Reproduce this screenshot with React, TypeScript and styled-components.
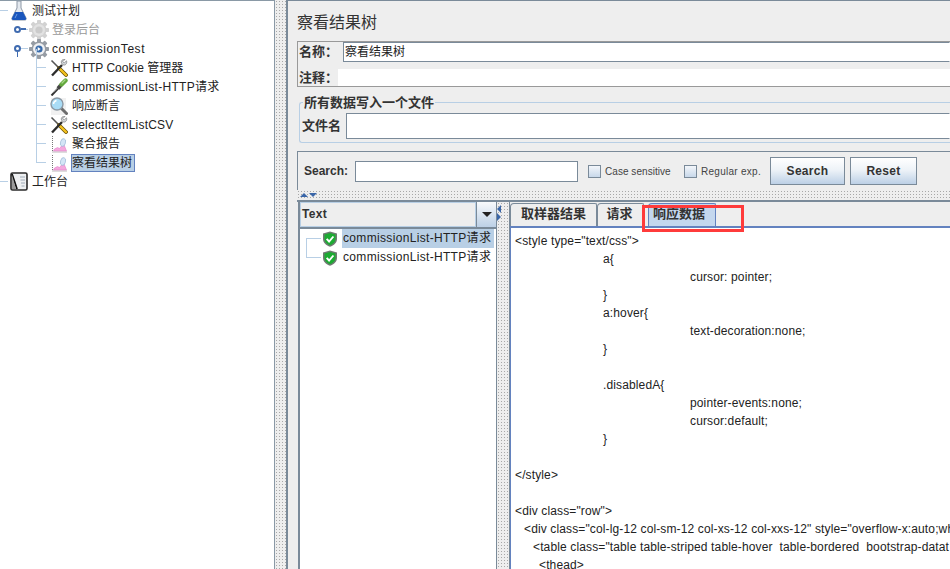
import { ReactNode } from 'react'
import styled, { createGlobalStyle } from 'styled-components'

const GlobalStyle = createGlobalStyle`
  html, body {
    margin: 0;
    padding: 0;
    background: #fff;
  }
  body {
    font-family: 'Liberation Sans', 'Noto Sans CJK SC', sans-serif;
    font-size: 12px;
    color: #222;
  }
`

const FlaskIcon = () => (
  <svg width='18' height='20' viewBox='0 0 18 20'>
    <path d='M7 0h4v7l5 10c.5 1.200 0 2-1.200 2H3.200C2 19 1.500 18.200 2 17L7 7z' fill='#e4e9ef' stroke='#8c97a5' />
    <path d='M5 11h8l3 6c.5 1.200 0 2-1.200 2H3.200C2 19 1.500 18.200 2 17z' fill='#1a56bd' />
    <path d='M7 13l-2 4' stroke='#6f9be0' />
  </svg>
)

const GearIcon = ({ disabled }: { disabled?: boolean }) => (
  <svg width='18' height='18' viewBox='0 0 18 18' style={{ overflow: 'visible' }}>
    <g fill={disabled ? '#d2d2d2' : '#969ca4'}>
      <circle cx='9' cy='9' r='7.500' />
      {[0, 45, 90, 135].map((a) => (
        <rect key={a} x='7' y='-1' width='4' height='20' rx='0.800' transform={`rotate(${a} 9 9)`} />
      ))}
    </g>
    <circle cx='9' cy='9' r='6' fill={disabled ? '#e2e2e2' : '#f0f1f3'} />
    <circle cx='9' cy='9' r='3.600' fill={disabled ? '#cbcbcb' : '#3a6cab'} />
    {!disabled && <path d='M7.700 7l3 2-3 2z' fill='#fff' />}
  </svg>
)

const ToolsIcon = () => (
  <svg width='18' height='18' viewBox='0 0 18 18'>
    <path d='M1.500 1.500l7.500 7.500' stroke='#555' strokeWidth='1.600' />
    <path d='M9 9l7 7' stroke='#6b5209' strokeWidth='3.800' strokeLinecap='round' />
    <path d='M9 9l7 7' stroke='#f4c21e' strokeWidth='2.400' strokeLinecap='round' />
    <path d='M2 16.500L12 6' stroke='#2c2c2c' strokeWidth='2.400' />
    <path d='M16.500 1.800l-2.300 2.200-1.400-1.400 2.200-2.200c-2.300-.6-4.300 1.400-3.600 3.600l1.800 2c2.300.6 4.200-1.600 3.300-4.200z' fill='#d4d8dc' stroke='#666' strokeWidth='0.600' />
  </svg>
)

const DropperIcon = () => (
  <svg width='18' height='18' viewBox='0 0 18 18'>
    <path d='M1.500 17.500L9 9.500' stroke='#333' strokeWidth='2' />
    <path d='M3.500 14.500L9 9' stroke='#9a9a9a' strokeWidth='0.700' />
    <path d='M8 10.500l3-3.500' stroke='#444' strokeWidth='3.800' />
    <path d='M11.500 6.500l4-4' stroke='#64a83e' strokeWidth='4.400' strokeLinecap='round' />
    <path d='M12 5l3-3' stroke='#a8d98a' strokeWidth='1.200' strokeLinecap='round' />
  </svg>
)

const LensIcon = () => (
  <svg width='18' height='18' viewBox='0 0 18 18'>
    <rect x='1' y='1' width='15' height='17' fill='#f1f1f1' />
    <path d='M10.500 10.500l6 6' stroke='#6d6d6d' strokeWidth='3' strokeLinecap='round' />
    <circle cx='7' cy='7' r='6' fill='#a9dcf6' stroke='#8c99a5' strokeWidth='1.400' />
    <path d='M3.500 7a4 4 0 0 1 3-3.500' stroke='#fff' strokeWidth='1.400' fill='none' />
  </svg>
)

const ChartIcon = () => (
  <svg width='18' height='18' viewBox='0 0 18 18'>
    <path d='M2.500 1v16H17' stroke='#777' strokeDasharray='1 1' fill='none' />
    <path d='M3.500 16l1-2 3-1.500 2 1 4-5 3 7.500z' fill='#f5a8dd' stroke='#dc74c4' strokeWidth='0.500' />
    <ellipse cx='13' cy='7.500' rx='2.500' ry='4' transform='rotate(15 13 7.500)' fill='#d4e5f6' stroke='#86a8cc' strokeWidth='0.500' />
  </svg>
)

const BookIcon = () => (
  <svg width='18' height='19' viewBox='0 0 18 19'>
    <rect x='1' y='1' width='16' height='17' rx='1.500' fill='#eef0f2' stroke='#2a2a2a' strokeWidth='1.600' />
    <path d='M2 2l5 15' stroke='#111' strokeWidth='1.800' />
    <path d='M2 3v14l4 0z' fill='#9a9a9a' />
    <path d='M10 5h5M10.500 8h4.500M11 11h4M11.500 14h3' stroke='#8a9aaa' strokeWidth='0.800' />
  </svg>
)

const ShieldIcon = () => (
  <svg width='16' height='16' viewBox='0 0 16 16'>
    <path d='M8 .5l7 2v5.500c0 3.800-3.200 6.500-7 7.800C4.200 14.500 1 11.800 1 8V2.500z' fill='#6f7a72' />
    <path d='M8 2l5.500 1.500v4.500c0 3-2.500 5.200-5.500 6.300-3-1.100-5.500-3.300-5.500-6.300V3.500z' fill='#1cab32' />
    <path d='M4.700 7.800l2.400 2.700 4.300-5' stroke='#fff' strokeWidth='1.900' fill='none' />
  </svg>
)

const Page = styled.div`
  width: 950px;
  height: 569px;
  display: flex;
  overflow: hidden;
`

const TreePane = styled.div`
  width: 275px;
  height: 100%;
  flex: none;
  box-sizing: border-box;
  border-top: 1px solid #8a99a6;
  border-right: 1px solid #8a99a6;
  background: #fff;
`

const TreeRow = styled.div<{ $depth: number; $muted?: boolean }>`
  position: relative;
  height: 19px;
  display: flex;
  align-items: center;
  gap: 3px;
  padding-left: ${(p) => 10 + p.$depth * 20}px;
  font-size: 12px;
  color: ${(p) => (p.$muted ? '#9a9a9a' : '#222')};
  &::before {
    content: '';
    position: absolute;
    left: ${(p) => (p.$depth === 0 ? 0 : p.$depth === 1 ? 18 : 37)}px;
    width: ${(p) => (p.$depth === 0 ? 8 : p.$depth === 1 ? 10 : 9)}px;
    top: 9px;
    border-top: 1px solid #b8cfe5;
  }
`

const TreeStem = styled.div`
  position: relative;
  &::before {
    content: '';
    position: absolute;
    left: 36px;
    top: -9px;
    bottom: 9px;
    border-left: 1px solid #b8cfe5;
  }
`

const Handle = styled.span<{ $open?: boolean }>`
  position: absolute;
  left: 14px;
  top: 6px;
  width: 3px;
  height: 3px;
  border: 2px solid #3f6bb0;
  border-radius: 50%;
  background: #fff;
  z-index: 1;
  &::after {
    content: '';
    position: absolute;
    background: #3f6bb0;
    ${(p) =>
      p.$open
        ? 'left: 1px; top: 5px; width: 1px; height: 5px;'
        : 'left: 5px; top: 0; width: 5px; height: 2px;'}
  }
`

const RowLabel = styled.span<{ $selected?: boolean; $track?: number }>`
  padding: 0 3px 0 1px;
  line-height: 18px;
  white-space: nowrap;
  letter-spacing: ${(p) => p.$track ?? 0}px;
  background: ${(p) => (p.$selected ? '#b8cfe5' : 'transparent')};
  outline: ${(p) => (p.$selected ? '1px solid #6382bf' : 'none')};
  outline-offset: -1px;
`

const VSplit = styled.div`
  width: 11px;
  height: 100%;
  flex: none;
  background-color: #eee;
  background-image: radial-gradient(#a8a8a8 0.5px, transparent 0.7px);
  background-size: 3px 3px;
`

const Panel = styled.div`
  flex: 1;
  min-width: 0;
  display: flex;
  flex-direction: column;
  box-sizing: border-box;
  border-left: 2px solid #7a8a99;
  border-top: 1px solid #7a8a99;
  background: #eee;
  padding-left: 9px;
`

const Title = styled.div`
  font-size: 16px;
  line-height: 20px;
  height: 40px;
  padding-top: 12px;
  box-sizing: border-box;
  color: #333;
`

const NameBox = styled.div`
  border: 1px solid #999;
  border-right: 0;
  height: 46px;
  box-sizing: border-box;
  padding-left: 1px;
  display: flex;
  flex-direction: column;
`

const FieldRow = styled.div<{ $height: number }>`
  height: ${(p) => p.$height}px;
  display: flex;
  align-items: center;
`

const BoldLabel = styled.span<{ $width: number }>`
  width: ${(p) => p.$width}px;
  flex: none;
  font-weight: 700;
  font-size: 13px;
  line-height: 16px;
  color: #333;
  white-space: nowrap;
`

const TextInput = styled.div<{ $flat?: boolean }>`
  flex: 1;
  height: 100%;
  box-sizing: border-box;
  background: #fff;
  padding-left: 1px;
  line-height: 18px;
  font-size: 12px;
  border: ${(p) => (p.$flat ? 'none' : '1px solid #fff')};
  border-top-color: ${(p) => (p.$flat ? 'transparent' : '#7a8a99')};
  border-left-color: ${(p) => (p.$flat ? 'transparent' : '#7a8a99')};
  border-bottom-color: ${(p) => (p.$flat ? 'transparent' : '#7a8a99')};
`

const FileGroup = styled.div`
  position: relative;
  margin: 15px 0 0 2px;
  height: 41px;
  box-sizing: border-box;
  border: 1px solid #b8cfe5;
  border-right: 0;
  border-radius: 3px 0 0 3px;
  padding: 10px 0 3px 2px;
  display: flex;
  align-items: center;
`

const Legend = styled.span`
  position: absolute;
  left: 3px;
  top: -8px;
  padding: 0 1px;
  background: #eee;
  font-weight: 700;
  font-size: 13px;
  line-height: 16px;
  color: #333;
`

const SearchBar = styled.div`
  margin-top: 8px;
  height: 39px;
  box-sizing: border-box;
  border: 1px solid #7a8a99;
  border-right: 0;
  border-bottom: 0;
  display: flex;
  align-items: center;
  padding: 0 0 0 6px;
`

const SearchLabel = styled.span`
  width: 51px;
  font-weight: 700;
  font-size: 12px;
  color: #333;
`

const SearchInput = styled.div`
  width: 223px;
  height: 21px;
  margin-right: 10px;
  box-sizing: border-box;
  background: #fff;
  border: 1px solid #7a8a99;
`

const CheckLabel = styled.label<{ $width: number; $track: number }>`
  width: ${(p) => p.$width}px;
  display: flex;
  align-items: center;
  gap: 4px;
  font-size: 10px;
  letter-spacing: ${(p) => p.$track}px;
  color: #444;
`

const CheckBox = styled.span`
  width: 13px;
  height: 13px;
  box-sizing: border-box;
  border: 1px solid #7a8a99;
  background: linear-gradient(#f3f6fa, #c8d8ea);
`

const PushButton = styled.button<{ $width: number }>`
  width: ${(p) => p.$width}px;
  height: 28px;
  margin-right: 5px;
  padding: 0;
  border: 1px solid #7a8a99;
  background: linear-gradient(#fff, #eef3f8 45%, #bcd0e6);
  font: 700 12px 'Liberation Sans', sans-serif;
  letter-spacing: 0.3px;
  color: #333;
`

const HSplit = styled.div`
  height: 10px;
  display: flex;
  align-items: center;
  gap: 1px;
  padding-left: 3px;
  background-image: radial-gradient(#a8a8a8 0.5px, transparent 0.7px);
  background-size: 3px 3px;
`

const Arrow = styled.span<{ $dir: 'up' | 'down' | 'left' | 'right' }>`
  width: 0;
  height: 0;
  border: 4px solid transparent;
  ${(p) =>
    p.$dir === 'up'
      ? 'border-bottom-color: #3a66a8; border-top-width: 0;'
      : p.$dir === 'down'
        ? 'border-top-color: #3a66a8; border-bottom-width: 0;'
        : p.$dir === 'left'
          ? 'border-right-color: #3a66a8; border-left-width: 0;'
          : 'border-left-color: #3a66a8; border-right-width: 0;'}
`

const Results = styled.div`
  flex: 1;
  min-height: 0;
  display: flex;
  border-top: 2px solid #7a8a99;
`

const ResultList = styled.div`
  width: 199px;
  flex: none;
  margin-left: 1px;
  box-sizing: border-box;
  border-left: 2px solid #7a8a99;
  border-right: 1px solid #7a8a99;
  background: #fff;
`

const Combo = styled.div`
  height: 27px;
  box-sizing: border-box;
  display: flex;
  align-items: stretch;
  border: 1px solid #7a8a99;
  border-width: 0 0 2px 0;
  background: #eee;
`

const ComboText = styled.div`
  flex: 1;
  font-weight: 700;
  font-size: 12px;
  line-height: 22px;
  padding-left: 1px;
  letter-spacing: 0.3px;
  color: #333;
  border: 1px solid #b8cfe5;
`

const ComboButton = styled.div`
  width: 19px;
  display: flex;
  align-items: center;
  justify-content: center;
  border-left: 1px solid #7a8a99;
  background: linear-gradient(#f8fafc, #bcd0e6);
  &::after {
    content: '';
    border: 5px solid transparent;
    border-top-color: #222;
    border-bottom-width: 0;
  }
`

const ResultRow = styled.div`
  position: relative;
  height: 19px;
  display: flex;
  align-items: center;
  gap: 4px;
  padding-left: 22px;
  font-size: 12px;
  letter-spacing: 0.33px;
  white-space: nowrap;
  &::before {
    content: '';
    position: absolute;
    left: 6px;
    top: 9px;
    width: 15px;
    border-top: 1px solid #b8cfe5;
  }
`

const ResultLabel = styled.span<{ $selected?: boolean }>`
  line-height: 19px;
  padding: 0 3px 0 1px;
  background: ${(p) => (p.$selected ? '#b8cfe5' : 'transparent')};
`

const ResultStem = styled.div`
  position: relative;
  &::before {
    content: '';
    position: absolute;
    left: 6px;
    top: 9px;
    height: 19px;
    border-left: 1px solid #b8cfe5;
  }
`

const Divider = styled.div`
  width: 12px;
  flex: none;
  display: flex;
  flex-direction: column;
  padding-top: 3px;
  box-sizing: border-box;
  background-image: radial-gradient(#a8a8a8 0.5px, transparent 0.7px);
  background-size: 3px 3px;
`

const Detail = styled.div`
  flex: 1;
  min-width: 0;
  position: relative;
  display: flex;
  flex-direction: column;
  border-left: 1px solid #7a8a99;
`

const TabStrip = styled.div`
  height: 26px;
  box-sizing: border-box;
  display: flex;
  align-items: flex-end;
  border-bottom: 2px solid #6382bf;
`

const Tab = styled.div<{ $active?: boolean; $width: number; $gap: number; $inset: number }>`
  width: ${(p) => p.$width}px;
  height: 23px;
  margin-right: ${(p) => p.$gap}px;
  padding-right: ${(p) => p.$inset}px;
  box-sizing: border-box;
  border: 1px solid ${(p) => (p.$active ? '#6382bf' : '#7a8a99')};
  border-bottom: 0;
  border-radius: 4px 2px 0 0;
  background: ${(p) => (p.$active ? '#c4d7ee' : '#eee')};
  font-weight: 700;
  font-size: 13px;
  line-height: 20px;
  text-align: center;
  color: #333;
`

const Callout = styled.div`
  position: absolute;
  left: 132px;
  top: 3px;
  width: 102px;
  height: 27px;
  box-sizing: border-box;
  border: 3px solid #ff3b3b;
`

const Code = styled.div`
  flex: 1;
  background: #fff;
  padding: 4px 0 0 4px;
  overflow: hidden;
  border-left: 1px solid #6382bf;
`

const CodeLine = styled.div<{ $indent?: number }>`
  height: 18px;
  line-height: 18px;
  padding-left: ${(p) => p.$indent ?? 0}px;
  font-size: 12px;
  letter-spacing: 0.13px;
  white-space: pre;
  color: #222;
`

const groupItems: { icon: ReactNode; label: string; muted?: boolean; open?: boolean; track: number }[] = [
  { icon: <GearIcon disabled />, label: '登录后台', muted: true, track: 0 },
  { icon: <GearIcon />, label: 'commissionTest', open: true, track: 0.55 },
]

const childItems: { icon: ReactNode; label: string; selected?: boolean; track: number }[] = [
  { icon: <ToolsIcon />, label: 'HTTP Cookie 管理器', track: 0 },
  { icon: <DropperIcon />, label: 'commissionList-HTTP请求', track: 0.3 },
  { icon: <LensIcon />, label: '响应断言', track: 0 },
  { icon: <ToolsIcon />, label: 'selectItemListCSV', track: 0.2 },
  { icon: <ChartIcon />, label: '聚合报告', track: 0 },
  { icon: <ChartIcon />, label: '察看结果树', selected: true, track: 0 },
]

const codeLines: [number, string][] = [
  [0, '<style type="text/css">'],
  [88, 'a{'],
  [175, 'cursor: pointer;'],
  [88, '}'],
  [88, 'a:hover{'],
  [175, 'text-decoration:none;'],
  [88, '}'],
  [0, ''],
  [88, '.disabledA{'],
  [175, 'pointer-events:none;'],
  [175, 'cursor:default;'],
  [88, '}'],
  [0, ''],
  [0, '</style>'],
  [0, ''],
  [0, '<div class="row">'],
  [9, '<div class="col-lg-12 col-sm-12 col-xs-12 col-xxs-12" style="overflow-x:auto;wh'],
  [18, '<table class="table table-striped table-hover  table-bordered  bootstrap-datat'],
  [24, '<thead>'],
]

const App = () => {
  return (
    <Page>
      <GlobalStyle />
      <TreePane>
        <TreeRow $depth={0}>
          <FlaskIcon />
          <RowLabel>测试计划</RowLabel>
        </TreeRow>
        {groupItems.map((item) => (
          <TreeRow key={item.label} $depth={1} $muted={item.muted}>
            <Handle $open={item.open} />
            {item.icon}
            <RowLabel $track={item.track}>{item.label}</RowLabel>
          </TreeRow>
        ))}
        <TreeStem>
          {childItems.map((item) => (
            <TreeRow key={item.label} $depth={2}>
              {item.icon}
              <RowLabel $selected={item.selected} $track={item.track}>
                {item.label}
              </RowLabel>
            </TreeRow>
          ))}
        </TreeStem>
        <TreeRow $depth={0}>
          <BookIcon />
          <RowLabel>工作台</RowLabel>
        </TreeRow>
      </TreePane>
      <VSplit />
      <Panel>
        <Title>察看结果树</Title>
        <NameBox>
          <FieldRow $height={20}>
            <BoldLabel $width={44}>名称：</BoldLabel>
            <TextInput>察看结果树</TextInput>
          </FieldRow>
          <FieldRow $height={7} />
          <FieldRow $height={17}>
            <BoldLabel $width={39}>注释：</BoldLabel>
            <TextInput $flat />
          </FieldRow>
        </NameBox>
        <FileGroup>
          <Legend>所有数据写入一个文件</Legend>
          <BoldLabel $width={44}>文件名</BoldLabel>
          <TextInput />
        </FileGroup>
        <SearchBar>
          <SearchLabel>Search:</SearchLabel>
          <SearchInput />
          <CheckLabel $width={96} $track={0.05}>
            <CheckBox />
            Case sensitive
          </CheckLabel>
          <CheckLabel $width={86} $track={0.27}>
            <CheckBox />
            Regular exp.
          </CheckLabel>
          <PushButton $width={75}>Search</PushButton>
          <PushButton $width={67}>Reset</PushButton>
        </SearchBar>
        <HSplit>
          <Arrow $dir='up' />
          <Arrow $dir='down' />
        </HSplit>
        <Results>
          <ResultList>
            <Combo>
              <ComboText>Text</ComboText>
              <ComboButton />
            </Combo>
            <ResultStem>
              <ResultRow>
                <ShieldIcon />
                <ResultLabel $selected>commissionList-HTTP请求</ResultLabel>
              </ResultRow>
              <ResultRow>
                <ShieldIcon />
                <ResultLabel>commissionList-HTTP请求</ResultLabel>
              </ResultRow>
            </ResultStem>
          </ResultList>
          <Divider>
            <Arrow $dir='left' />
            <Arrow $dir='right' />
          </Divider>
          <Detail>
            <TabStrip>
              <Tab $width={87} $gap={0} $inset={0}>
                取样器结果
              </Tab>
              <Tab $width={47} $gap={4} $inset={2}>
                请求
              </Tab>
              <Tab $width={68} $gap={0} $inset={6} $active>
                响应数据
              </Tab>
            </TabStrip>
            <Callout />
            <Code>
              {codeLines.map(([indent, text], i) => (
                <CodeLine key={i} $indent={indent}>
                  {text}
                </CodeLine>
              ))}
            </Code>
          </Detail>
        </Results>
      </Panel>
    </Page>
  )
}

export default App
